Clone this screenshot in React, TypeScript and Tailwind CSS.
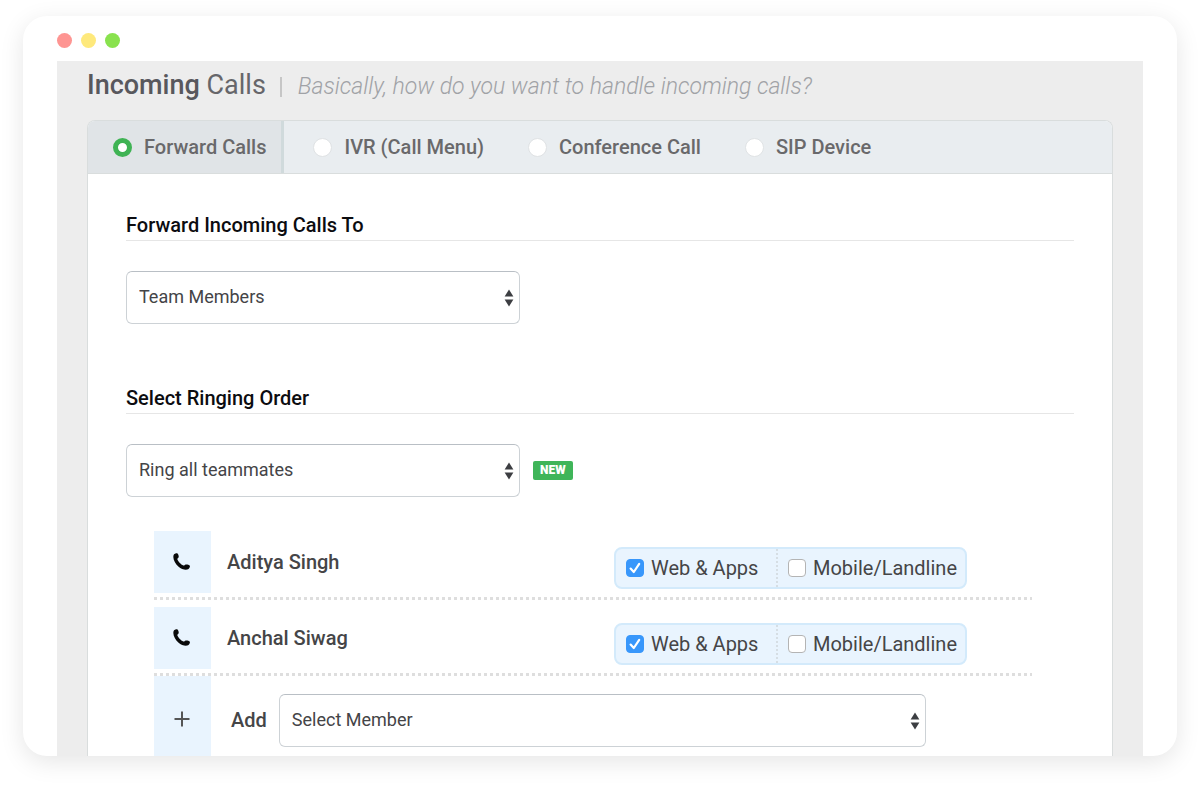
import { useState, type ReactNode } from "react";

const TABS = ["Forward Calls", "IVR (Call Menu)", "Conference Call", "SIP Device"];
const MEMBERS = ["Aditya Singh", "Anchal Siwag"];

function SortArrows() {
  return (
    <svg
      viewBox="0 0 10 18"
      className="pointer-events-none absolute right-1.5 top-1/2 h-[18px] w-2.5 -translate-y-1/2"
      aria-hidden="true"
    >
      <path d="M5 0.6 L9.4 7.6 H0.6 Z" fill="#3c3e42" />
      <path d="M5 17.4 L9.4 10.4 H0.6 Z" fill="#3c3e42" />
    </svg>
  );
}

function SelectBox({ label, options, className }: { label: string; options: string[]; className: string }) {
  return (
    <div className={`relative ${className}`}>
      <select
        aria-label={label}
        className="h-[53px] w-full appearance-none rounded-md border border-[#cdd2d6] border-t-[#b9bfc5] bg-white pb-0.5 pl-3 pr-8 text-[18px] text-[#444447] outline-none"
      >
        {options.map((option) => (
          <option key={option}>{option}</option>
        ))}
      </select>
      <SortArrows />
    </div>
  );
}

function SectionTitle({ children }: { children: ReactNode }) {
  return (
    <h2 className="border-b border-[#e6e6e6] pb-[3px] text-[20px] font-medium leading-6 text-[#0c0c10]">
      {children}
    </h2>
  );
}

function PhoneIcon() {
  return (
    <svg viewBox="0 0 16 16" className="h-[17px] w-[17px]" aria-hidden="true">
      <path
        fill="#0a0a0a"
        d="M0.7 1.6 C1.5 0.6 3.4 0 4.2 0.5 C5.1 1.2 5.6 3.2 5.3 4.1 C5 4.9 4 5.1 4.1 5.9 C4.5 7.6 7.4 10.9 9.8 11.8 C10.8 12.1 11.1 11.2 11.9 10.9 C12.9 10.6 15.2 11.2 15.9 12 C16.2 13.1 15.2 14.6 14.2 15.3 C12.2 16.3 8.2 15.6 5 12.7 C1.9 9.8 -0.7 5 0.7 1.6 Z"
      />
    </svg>
  );
}

function Check({ label, checked, onChange }: { label: string; checked: boolean; onChange: () => void }) {
  return (
    <label className="flex items-center gap-[7px] text-[20px] leading-6 text-[#454547]">
      <span className="relative flex h-[18px] w-[18px] flex-none">
        <input
          type="checkbox"
          checked={checked}
          onChange={onChange}
          className="h-[18px] w-[18px] appearance-none rounded border border-[#b4b4b4] bg-white checked:border-[#3897fb] checked:bg-[#3897fb]"
        />
        {checked && (
          <svg viewBox="0 0 18 18" className="pointer-events-none absolute inset-0" fill="none" aria-hidden="true">
            <path d="M4.6 9.6 L7.8 13 L13.2 4.8" stroke="#fff" strokeWidth="2.2" strokeLinecap="round" strokeLinejoin="round" />
          </svg>
        )}
      </span>
      {label}
    </label>
  );
}

function MemberRow({ name }: { name: string }) {
  const [web, setWeb] = useState(true);
  const [mobile, setMobile] = useState(false);
  return (
    <li className="pt-[7px]">
      <div className="flex h-[62px] items-center">
        <div className="flex h-full w-[57px] items-center justify-center bg-[#e9f4fe] pb-0.5 pr-0.5">
          <PhoneIcon />
        </div>
        <span className="min-w-0 flex-1 pl-4 text-[20px] font-medium text-[#454547]">{name}</span>
        <div className="mb-1 mr-[65px] flex h-[42px] self-end rounded-lg border-2 border-[#d3eafb] bg-[#e9f4fe]">
          <div className="flex w-[162px] items-center border-r-2 border-dotted border-[#d6dee4] pl-2.5">
            <Check label="Web & Apps" checked={web} onChange={() => setWeb(!web)} />
          </div>
          <div className="flex items-center pl-2.5 pr-2">
            <Check label="Mobile/Landline" checked={mobile} onChange={() => setMobile(!mobile)} />
          </div>
        </div>
      </div>
      <div className="mt-1 h-[3px] bg-[repeating-linear-gradient(to_right,#dedede_0_3px,transparent_3px_6px)]" />
    </li>
  );
}

export default function App() {
  const [tab, setTab] = useState(0);
  return (
    <div className="bg-white px-[23px] pb-[31px] pt-4 font-['Roboto',sans-serif]">
      <main className="overflow-hidden rounded-3xl bg-white px-[34px] shadow-[0_6px_24px_rgba(0,0,0,0.10)]">
        <div className="flex h-[45px] items-center gap-[9px] pt-1">
          <span className="h-[15px] w-[15px] rounded-full bg-[#fe9592]" />
          <span className="h-[15px] w-[15px] rounded-full bg-[#fee97c]" />
          <span className="h-[15px] w-[15px] rounded-full bg-[#89e24e]" />
        </div>

        <div className="bg-[#ededed] px-[30px]">
          <header className="flex h-[59px] items-baseline pt-2">
            <h1 className="text-[27px] leading-8 text-[#66666a]">
              <span className="font-medium text-[#58585d]">Incoming</span> Calls
            </h1>
            <span className="ml-3.5 mr-4 mt-2 h-5 w-0.5 self-start bg-[#c6c6c6]" />
            <p className="text-[23px] font-light italic leading-8 text-[#a0a2a6]">
              Basically, how do you want to handle incoming calls?
            </p>
          </header>

          <div className="overflow-hidden rounded-t-lg border border-b-0 border-[#d9dddd] bg-white">
            <div role="radiogroup" aria-label="Incoming call handling" className="flex border-b border-[#d9dddd] bg-[#e9edf0]">
              {TABS.map((name, i) => (
                <label
                  key={name}
                  className={`flex h-[52px] items-center pr-[15px] text-[20px] font-medium text-[#69696b] ${
                    i === 0 ? "pl-[25px]" : "pl-[29px]"
                  } ${i === tab ? "border-r-3 border-[#d0dadc] bg-[#e0e4e7]" : ""}`}
                >
                  <input
                    type="radio"
                    name="handling"
                    checked={i === tab}
                    onChange={() => setTab(i)}
                    className="mr-3 h-[19px] w-[19px] appearance-none rounded-full border border-[#dfe2e4] bg-white checked:border-5 checked:border-[#3fb354]"
                  />
                  {name}
                </label>
              ))}
            </div>

            <div className="px-[38px] pt-[39px]">
              <section>
                <SectionTitle>Forward Incoming Calls To</SectionTitle>
                <SelectBox label="Forward incoming calls to" options={["Team Members"]} className="mt-[30px] w-[394px]" />
              </section>

              <section className="pt-[62px]">
                <SectionTitle>Select Ringing Order</SectionTitle>
                <div className="mt-[30px] flex items-center gap-[13px]">
                  <SelectBox label="Ringing order" options={["Ring all teammates"]} className="w-[394px]" />
                  <span className="rounded-xs bg-[#3fb559] px-[7px] text-[12px] font-black leading-[19px] text-white">NEW</span>
                </div>

                <ul className="ml-7 mr-[42px] mt-[27px]">
                  {MEMBERS.map((name) => (
                    <MemberRow key={name} name={name} />
                  ))}
                  <li className="flex">
                    <div className="flex w-[57px] items-center justify-center bg-[#e9f4fe] pr-0.5 pt-1.5">
                      <svg viewBox="0 0 16 16" className="h-4 w-4" stroke="#555" strokeWidth="2" aria-hidden="true">
                        <path d="M8 0.5 V15.5 M0.5 8 H15.5" />
                      </svg>
                    </div>
                    <div className="flex flex-1 items-center pb-[9px] pl-5 pr-[106px] pt-[18px]">
                      <span className="mr-3 pb-0.5 text-[20px] font-medium text-[#454547]">Add</span>
                      <SelectBox label="Add member" options={["Select Member"]} className="flex-1" />
                    </div>
                  </li>
                </ul>
              </section>
            </div>
          </div>
        </div>
      </main>
    </div>
  );
}
